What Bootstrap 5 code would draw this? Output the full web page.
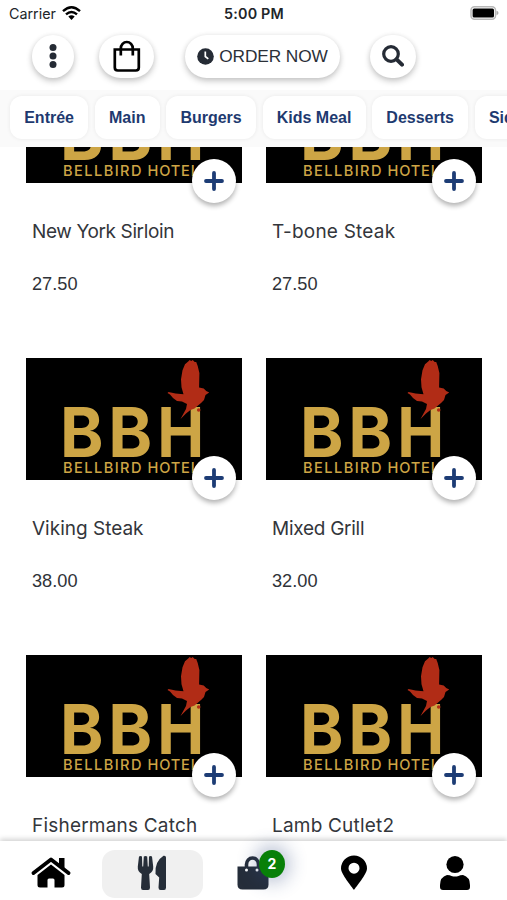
<!DOCTYPE html>
<html lang="en">
<head>
<meta charset="utf-8">
<meta name="viewport" content="width=device-width, initial-scale=1">
<title>Bellbird Hotel menu</title>
<link href="https://cdn.jsdelivr.net/npm/bootstrap@5.3.0/dist/css/bootstrap.min.css" rel="stylesheet">
<style>
body{height:900px;font-family:"Liberation Sans",Arial,sans-serif;color:#212529;background:#fff}
.screen{width:507px;height:900px}
.top-area{height:147px;background:#fff;z-index:2}
.status{height:28px;font:14.3px/28px Inter,sans-serif;padding:0 8px 0 9px}
.status .clock{font-weight:600;font-size:14.3px;letter-spacing:.2px}
.side{width:150px}
.tools{height:62px;padding:7px 0 0 32px}
.pill{height:43px;border-radius:22px;padding-bottom:1.5px;background:#fff;box-shadow:0 3px 6px rgba(0,0,0,.22),0 0 5px rgba(0,0,0,.06)}
.pill.order{padding-bottom:0}
.round{width:42px}
.bagpill{width:55px;margin-left:25px}
.order{width:155px;margin-left:31px;gap:5px;font-size:17.3px;letter-spacing:-.1px;color:#2b3038}
.search{width:46px;margin-left:30px}
.tabs{height:57px;padding:6px 0 0 10px;gap:6.6px;background:#fafafa}
.tab{height:43px;border-radius:12px;background:#fff;color:#1e3a70;font-weight:700;font-size:16px;line-height:43px;padding:0 14.2px;box-shadow:0 0 4px rgba(0,0,0,.07);text-decoration:none;white-space:nowrap}
.menu-grid{display:grid;grid-template-columns:216px 216px;column-gap:24px;grid-auto-rows:297px;margin:-86.5px 0 0 26px}
.logo{display:block;width:216px;height:122px}
.plus{width:44px;height:44px;right:6.5px;top:98.5px;border-radius:50%;background:#fff;box-shadow:0 3px 5px rgba(0,0,0,.3)}
.dish{font:19px/28px Inter,"Open Sans",sans-serif;color:#33363b;padding:35px 0 0 6px;white-space:nowrap}
.tight{letter-spacing:-.38px}
.snug{letter-spacing:-.27px}
.loose{letter-spacing:.2px}
.price{font-size:18.2px;line-height:24px;padding:26.5px 0 0 6px;color:#303338}
.bottom-bar{height:59px;background:#fff;z-index:2;padding:9px 0 0 1px;box-shadow:0 -2px 5px rgba(0,0,0,.18)}
.slot{width:101.2px;height:48px;border-radius:13px}
.slot svg{margin:-2px 2px 0 0}
.slot.on{background:#f0f0f0}
.count{left:55.5px;top:0;width:26px;height:28px;border-radius:50%;background:#088008;color:#fff;font:700 14px/28px Inter,sans-serif;box-shadow:0 0 18px 5px rgba(45,70,125,.33)}
</style>
<script src="https://cdn.jsdelivr.net/npm/bootstrap@5.3.0/dist/js/bootstrap.bundle.min.js"></script>
</head>
<body class="overflow-hidden">
<svg width="0" height="0" class="d-none">
<symbol id="logo" viewBox="0 0 216 122">
<rect width="216" height="122" fill="#000"/>
<g fill="#cda545" font-family="Inter, sans-serif">
<g font-size="69" font-weight="700">
<text y="99.3" x="34" textLength="43.500" lengthAdjust="spacingAndGlyphs">B</text>
<text y="99.3" x="82.300" textLength="44" lengthAdjust="spacingAndGlyphs">B</text>
<text y="99.3" x="131.300" textLength="47" lengthAdjust="spacingAndGlyphs">H</text>
</g>
<g font-size="14.600" font-weight="500">
<text y="115.300" x="37" textLength="78.500">BELLBIRD</text>
<text y="115.300" x="121.500" textLength="51.500">HOTEL</text>
</g>
</g>
<g transform="translate(-1.300 0)"><path fill="#b12c16" d="M163.500 3.500l1.500-1.500 1.500 1 1.500-1 2 2 1.500 0 1.500 4 1.700 7-.3 14.500 4.600 1 2.500 2.500 3 1.500-3.700 2.500-1.500 5-3 3-6.500 5.500-4 1.500-4.500 3.500-5.500 5.500 5.500-10 1-5-5-2.500-5-.5-4-3-3-3.500-2.500-1.500 1-1 7 1.500 8 .8-2-7-.5-8 1.500-9 2.500-6z"/>
<circle cx="174" cy="52" r="1.800" fill="#b12c16"/></g>
</symbol>
<symbol id="add" viewBox="0 0 20 20"><path d="M10 2v16M2 10h16" stroke="#1d3c75" stroke-width="3.8" stroke-linecap="round"/></symbol>
</svg>
<div class="screen d-flex flex-column overflow-hidden">
<header class="top-area position-relative flex-shrink-0">
<div class="status d-flex justify-content-between">
<div class="side d-flex align-items-center gap-2"><span>Carrier</span>
<svg width="19" height="14" viewBox="0 0 19 14" style="margin:-2px 0 0 -2px"><g fill="none" stroke="#000" stroke-width="2.4"><path d="M1 5.2Q9.500-2.600 18 5.200"/><path d="M4 8.400Q9.500 3.400 15 8.400"/></g><path d="M6.300 10.600Q9.500 7.900 12.700 10.600L9.500 14z"/></svg></div>
<span class="clock">5:00 PM</span>
<div class="side d-flex align-items-center justify-content-end"><svg width="30" height="14" viewBox="0 0 30 14" style="margin-top:-2px"><rect x="2" y=".8" width="24.500" height="12.400" rx="3.500" fill="#fff" stroke="#b8b8b8" stroke-width="1.500"/><rect x="3.600" y="2.400" width="21.400" height="9.200" rx="1.500"/><path d="M27.500 4.800q2 .6 2 2.200t-2 2.200z" fill="#aaa"/></svg></div>
</div>
<div class="tools d-flex align-items-start">
<div class="pill round d-flex align-items-center justify-content-center"><svg width="8" height="26" viewBox="0 0 8 26" fill="#252b35"><circle cx="4" cy="4.500" r="3.500"/><circle cx="4" cy="13" r="3.500"/><circle cx="4" cy="21.500" r="3.500"/></svg></div>
<div class="pill bagpill d-flex align-items-center justify-content-center"><svg width="28" height="32" viewBox="0 0 28 32" fill="none" stroke="#000" stroke-width="2.700"><path d="M1.800 9.500h24v18q0 3-3 3h-18q-3 0-3-3zM7.800 15.500V8.500a6 6.500 0 0 1 12 0v7"/></svg></div>
<div class="pill order d-flex align-items-center justify-content-center"><svg width="17" height="17" viewBox="0 0 17 17"><circle cx="8.500" cy="8.500" r="8.300" fill="#252b35"/><path d="M8.300 3.500v5l3 2.400" fill="none" stroke="#fff" stroke-width="1.700"/></svg><span>ORDER NOW</span></div>
<div class="pill search d-flex align-items-center justify-content-center"><svg width="22" height="22" viewBox="0 0 22 22" fill="none" stroke="#252b35"><circle cx="9" cy="9" r="7.300" stroke-width="3.200"/><path d="M14.600 14.300L20 19.700" stroke-width="4" stroke-linecap="round"/></svg></div>
</div>
<nav class="tabs d-flex overflow-hidden">
<a class="tab">Entrée</a><a class="tab">Main</a><a class="tab">Burgers</a><a class="tab">Kids Meal</a><a class="tab">Desserts</a><a class="tab">Sides</a>
</nav>
</header>
<main class="flex-fill overflow-hidden">
<div class="menu-grid">
<article class="position-relative"><svg class="logo"><use href="#logo"/></svg><div class="plus position-absolute d-flex align-items-center justify-content-center"><svg width="20" height="20"><use href="#add"/></svg></div><div class="dish tight">New York Sirloin</div><div class="price">27.50</div></article>
<article class="position-relative"><svg class="logo"><use href="#logo"/></svg><div class="plus position-absolute d-flex align-items-center justify-content-center"><svg width="20" height="20"><use href="#add"/></svg></div><div class="dish loose">T-bone Steak</div><div class="price">27.50</div></article>
<article class="position-relative"><svg class="logo"><use href="#logo"/></svg><div class="plus position-absolute d-flex align-items-center justify-content-center"><svg width="20" height="20"><use href="#add"/></svg></div><div class="dish">Viking Steak</div><div class="price">38.00</div></article>
<article class="position-relative"><svg class="logo"><use href="#logo"/></svg><div class="plus position-absolute d-flex align-items-center justify-content-center"><svg width="20" height="20"><use href="#add"/></svg></div><div class="dish snug">Mixed Grill</div><div class="price">32.00</div></article>
<article class="position-relative"><svg class="logo"><use href="#logo"/></svg><div class="plus position-absolute d-flex align-items-center justify-content-center"><svg width="20" height="20"><use href="#add"/></svg></div><div class="dish loose">Fishermans Catch</div></article>
<article class="position-relative"><svg class="logo"><use href="#logo"/></svg><div class="plus position-absolute d-flex align-items-center justify-content-center"><svg width="20" height="20"><use href="#add"/></svg></div><div class="dish loose">Lamb Cutlet2</div></article>
</div>
</main>
<nav class="bottom-bar position-relative flex-shrink-0 d-flex">
<div class="slot d-flex align-items-center justify-content-center"><svg width="40" height="34" viewBox="0 0 40 34"><path d="M2.500 17L20 3.500 37.500 17" fill="none" stroke="#000" stroke-width="3.800" stroke-linecap="round" stroke-linejoin="round"/><path d="M28 2h5.500v12.500l-5.500-4.500zM20 8.500L33.500 19v10q0 2.500-2.500 2.500H23.500v-7.500q0-1.500-1.500-1.500h-4q-1.500 0-1.500 1.500v7.500H9q-2.500 0-2.500-2.500V19z"/></svg></div>
<div class="slot on d-flex align-items-center justify-content-center"><svg width="30" height="36" viewBox="0 0 30 36" fill="#252d38"><path d="M2 1.500q1.500-1 3 0l.3 10h.9l.6-10q1.700-1 3.400 0l.6 10h.9l.3-10q1.500-1 3 0l1.200 10q.5 5-4 7.500l.8 13.500q0 2.500-2 2.500H6q-2 0-2-2.500l.8-13.500q-4.500-2.500-4-7.500zM26.500 .800q2.500-.5 2.500 1.700v30q0 2.500-2 2.500h-3.500q-2 0-2-2.500l.7-10-3.700-3.500q-1-12.500 8-18.200z"/></svg></div>
<div class="slot position-relative d-flex align-items-center justify-content-center"><svg width="34" height="36" viewBox="0 0 34 36"><path d="M10.500 18v-8.500a6 6.500 0 0 1 12 0v8.500" fill="none" stroke="#252d3a" stroke-width="3.600"/><path d="M1.500 11.500h31v18q0 5-5 5H6.500q-5 0-5-5z" fill="#252d3a"/><circle cx="10.500" cy="15" r="1.500" fill="#fff"/><circle cx="21" cy="15" r="1.500" fill="#fff"/></svg><span class="count position-absolute text-center">2</span></div>
<div class="slot d-flex align-items-center justify-content-center"><svg width="28" height="36" viewBox="0 0 28 36"><path fill-rule="evenodd" d="M14 35C12 32 1 19 1 13.500A13 13 0 0 1 27 13.500C27 19 16 32 14 35zM14 7.700a5.500 5.500 0 1 0 0 11 5.500 5.500 0 0 0 0-11z"/></svg></div>
<div class="slot d-flex align-items-center justify-content-center"><svg width="32" height="36" viewBox="0 0 32 36"><circle cx="16" cy="9.500" r="8.600"/><path d="M8 20q3 0 4.500.9 3.500 1 7 0Q21 20 24 20q7 2 7 10v2q0 3-3 3H4q-3 0-3-3v-2q0-8 7-10z"/></svg></div>
</nav>
</div>
</body>
</html>
